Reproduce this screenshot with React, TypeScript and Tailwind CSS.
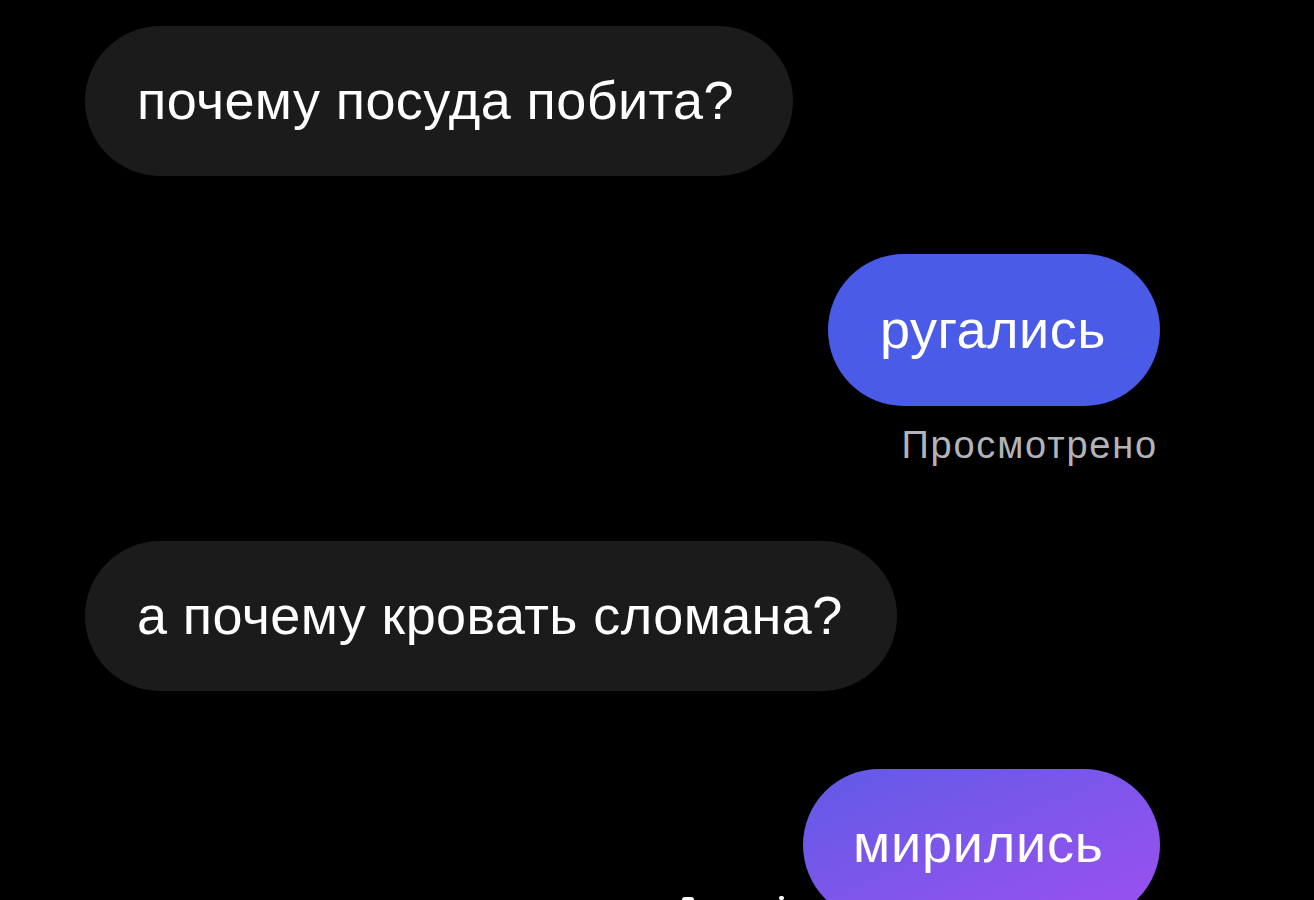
import React from "react";

const font = { fontFamily: '"Liberation Sans", Arial, sans-serif' };

function Incoming({ text, width }: { text: string; width: string }) {
  return (
    <div
      className={`flex h-[150px] items-center rounded-full bg-[#1b1b1c] pl-[52px] text-[54px] leading-none tracking-[0.4px] text-white ${width}`}
    >
      <span className="-mt-[2px]">{text}</span>
    </div>
  );
}

export default function App() {
  return (
    <div className="relative h-[900px] w-[1314px] overflow-hidden bg-black" style={font}>
      <div className="flex w-[1160px] flex-col pl-[85px] pt-[26px]">
        <Incoming text="почему посуда побита?" width="w-[708px]" />

        <div className="mt-[78px] flex flex-col items-end">
          <div className="flex h-[152px] w-[332px] items-center rounded-full bg-[#4a5be8] pl-[52px] text-[54px] leading-none tracking-[0.5px] text-white">
            <span className="-mt-[2px]">ругались</span>
          </div>
          <div className="mt-[20px] pr-[2px] text-[38px] leading-none tracking-[1.8px] text-[#b4b4b8]">
            Просмотрено
          </div>
        </div>

        <div className="mt-[77px]">
          <Incoming text="а почему кровать сломана?" width="w-[812px]" />
        </div>

        <div className="mt-[78px] flex justify-end">
          <div className="flex h-[152px] w-[357px] items-center rounded-full bg-gradient-to-br from-[#5f5ae6] to-[#9c4ff0] pl-[50px] text-[54px] leading-none tracking-[0.8px] text-white">
            <span className="-mt-[4px]">мирились</span>
          </div>
        </div>
      </div>

      {/* tops of a caption line cut off by the bottom edge */}
      <div className="absolute bottom-0 left-[682px] h-[3px] w-[12px] rounded-t-full bg-white" />
      <div className="absolute bottom-0 left-[779px] h-[4px] w-[5px] rounded-full bg-white" />
    </div>
  );
}
